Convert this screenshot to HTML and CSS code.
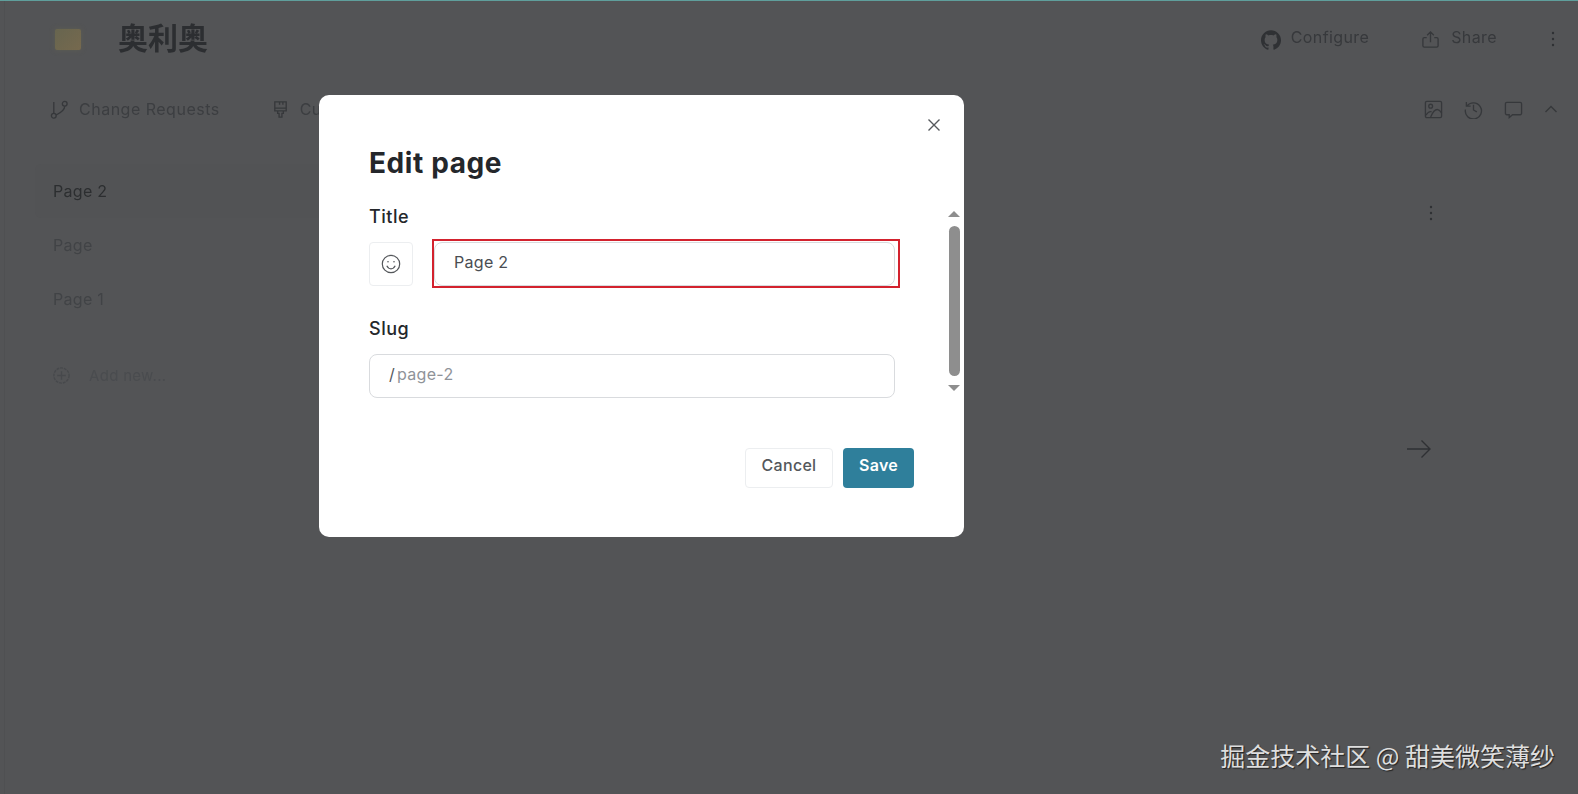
FILE: index.html
```html
<!DOCTYPE html>
<html lang="en">
<head>
    <meta charset="UTF-8">
    <meta name="viewport" content="width=device-width, initial-scale=1.0">
    <title>Edit page</title>
    <link rel="stylesheet" href="styles.css">
</head>
<body>
    <div class="page">
        <header class="topbar">
            <div class="logo"></div>
            <h1 class="site-title">奥利奥</h1>
            <a class="top-link link-configure">
                <svg class="icon-gh" viewBox="0 0 24 24"><path fill="currentColor" d="M12 .297c-6.63 0-12 5.373-12 12 0 5.303 3.438 9.8 8.205 11.385.6.113.82-.258.82-.577 0-.285-.01-1.04-.015-2.04-3.338.724-4.042-1.61-4.042-1.61C4.422 18.07 3.633 17.7 3.633 17.7c-1.087-.744.084-.729.084-.729 1.205.084 1.838 1.236 1.838 1.236 1.07 1.835 2.809 1.305 3.495.998.108-.776.417-1.305.76-1.605-2.665-.3-5.466-1.332-5.466-5.93 0-1.31.465-2.38 1.235-3.22-.135-.303-.54-1.523.105-3.176 0 0 1.005-.322 3.3 1.23.96-.267 1.98-.399 3-.405 1.02.006 2.04.138 3 .405 2.28-1.552 3.285-1.23 3.285-1.23.645 1.653.24 2.873.12 3.176.765.84 1.23 1.91 1.23 3.22 0 4.61-2.805 5.625-5.475 5.92.42.36.81 1.096.81 2.22 0 1.606-.015 2.896-.015 3.286 0 .315.21.69.825.57C20.565 22.092 24 17.592 24 12.297c0-6.627-5.373-12-12-12"/></svg>
                <span>Configure</span>
            </a>
            <a class="top-link link-share">
                <svg class="icon" viewBox="0 0 20 20"><path d="M6 8H3.500A1.500 1.500 0 0 0 2 9.500v7A1.500 1.500 0 0 0 3.500 18h13a1.500 1.500 0 0 0 1.500-1.500v-7A1.500 1.500 0 0 0 16.500 8H14M10 13V2M6.500 5.500 10 2l3.500 3.500"/></svg>
                <span>Share</span>
            </a>
            <svg class="icon-dots" viewBox="0 0 4 16"><circle cx="2" cy="2" r="1.200"/><circle cx="2" cy="8" r="1.200"/><circle cx="2" cy="14" r="1.200"/></svg>
        </header>

        <nav class="subnav">
            <a class="nav-link link-requests">
                <svg class="icon" viewBox="0 0 20 20"><circle cx="4" cy="16.500" r="2.500"/><circle cx="15.500" cy="4" r="2.500"/><path d="M4 14V2M15.500 6.500C15.500 11 10 14 6.500 15.800"/></svg>
                <span>Change Requests</span>
            </a>
            <a class="nav-link link-customize">
                <svg class="icon" viewBox="0 0 20 20"><path d="M4 2h12v9.500H4zM4 8.500h12M7 11.500h6V14h-1.500v4h-3v-4H7zM9 2v3M12.500 2v3"/></svg>
                <span>Customize</span>
            </a>
            <div class="nav-tools">
                <svg class="icon" viewBox="0 0 20 20"><rect x="1.500" y="1.500" width="17" height="17" rx="1.500"/><circle cx="7" cy="6.500" r="2"/><path d="M2 16c2-3 4-4.500 6-3.500M7 18c2-5 5-8 7-8 2 0 3.500 2 4.500 3.500"/></svg>
                <svg class="icon" viewBox="0 0 20 20"><path d="M3 6.500A8.500 8.500 0 1 1 1.500 10M2.500 2v4.500H7M10 5v5.500l3.500 2"/></svg>
                <svg class="icon" viewBox="0 0 20 20"><path d="M3 2.500h14A1.500 1.500 0 0 1 18.500 4v10a1.500 1.500 0 0 1-1.500 1.500H9L5.500 18.500v-3H3A1.500 1.500 0 0 1 1.500 14V4A1.500 1.500 0 0 1 3 2.500z"/></svg>
                <svg class="icon icon-small" viewBox="0 0 14 14"><path d="M1.500 10 7 4.500l5.500 5.500"/></svg>
            </div>
        </nav>

        <div class="content">
            <aside class="sidebar">
                <div class="side-item side-active">Page 2</div>
                <div class="side-item">Page</div>
                <div class="side-item">Page 1</div>
                <div class="side-add">
                    <svg class="icon" viewBox="0 0 20 20"><circle cx="10" cy="10" r="8" stroke-dasharray="3 1"/><path d="M10 5.500v9M5.500 10h9"/></svg>
                    <span>Add new...</span>
                </div>
            </aside>
            <main class="main">
                <svg class="icon-dots" viewBox="0 0 4 16"><circle cx="2" cy="2" r="1.200"/><circle cx="2" cy="8" r="1.200"/><circle cx="2" cy="14" r="1.200"/></svg>
                <svg class="icon-arrow" viewBox="0 0 24 20"><path d="M0 10h23M14.500 1.500 23 10l-8.500 8.500"/></svg>
            </main>
        </div>
    </div>

    <div class="top-line"></div>

    <div class="modal">
        <button class="modal-close">
            <svg viewBox="0 0 14 14"><path d="M1.500 1.500l11 11M12.500 1.500l-11 11"/></svg>
        </button>
        <h2 class="modal-title">Edit page</h2>
        <div class="modal-body">
            <div class="fields">
                <label class="field-label">Title</label>
                <div class="title-row">
                    <div class="emoji-box">
                        <svg viewBox="0 0 20 20"><circle cx="10" cy="10" r="8.700"/><path d="M5.800 11.800c1 2 2.500 3 4.200 3s3.200-1 4.200-3"/><circle class="eye" cx="7" cy="7.800" r=".8"/><circle class="eye" cx="13" cy="7.800" r=".8"/></svg>
                    </div>
                    <div class="title-input">
                        <input class="text-input" type="text" value="Page 2">
                        <div class="annotation"></div>
                    </div>
                </div>
                <label class="field-label slug-label">Slug</label>
                <div class="slug-input"><span class="slash">/</span><span class="slug-value">page-2</span></div>
            </div>
            <div class="scrollbar">
                <div class="arrow-up"></div>
                <div class="thumb"></div>
                <div class="arrow-down"></div>
            </div>
        </div>
        <div class="modal-footer">
            <button class="btn btn-cancel">Cancel</button>
            <button class="btn btn-save">Save</button>
        </div>
    </div>

    <div class="watermark">掘金技术社区 @ 甜美微笑薄纱</div>
</body>
</html>
```

FILE: styles.css
```css
* {
    box-sizing: border-box;
}
body {
    margin: 0;
    height: 794px;
    overflow: hidden;
    background-color: #535456;
    color: #37393c;
    font-family: "Inter", "Noto Sans CJK SC", sans-serif;
}
svg {
    display: block;
    flex: none;
}
.icon {
    width: 19px;
    height: 19px;
    fill: none;
    stroke: #36383b;
    stroke-width: 1.4;
}
.icon-small {
    width: 14px;
    height: 14px;
}
.icon-dots {
    width: 4px;
    height: 16px;
    fill: #2f3134;
}
.page {
    height: 794px;
    border-left: 1px solid #4f5052;
    margin-left: 4px;
    filter: blur(0.4px);
}
.top-line {
    position: absolute;
    top: 0;
    left: 0;
    right: 0;
    height: 1px;
    background-color: #5f9f9c;
}
.topbar {
    display: flex;
    align-items: center;
    height: 78px;
    padding: 0 23px 0 50px;
}
.logo {
    width: 26px;
    height: 21px;
    background: linear-gradient(135deg, #67654f, #76694e);
    border-radius: 2px;
    box-shadow: 0 0 5px #5f5e52;
}
.site-title {
    margin: -6px 0 0 37px;
    font-size: 30px;
    font-weight: 700;
    color: #2c2e31;
    font-family: "Noto Sans CJK SC", sans-serif;
}
.top-link {
    display: flex;
    align-items: center;
    font-size: 16px;
    letter-spacing: 0.4px;
    color: #37393c;
}
.link-configure {
    margin-left: auto;
    gap: 10px;
}
.link-share {
    margin-left: 52px;
    gap: 11px;
}
.top-link span {
    margin-top: -4px;
}
.icon-gh {
    width: 20px;
    height: 20px;
    margin-top: 1px;
    color: #2f3134;
}
.link-share + .icon-dots {
    margin-left: 54px;
}
.subnav {
    display: flex;
    align-items: center;
    height: 40px;
    margin-top: 11px;
    padding: 0 19px 0 45px;
}
.nav-link {
    display: flex;
    align-items: center;
    gap: 10px;
    font-size: 16px;
    letter-spacing: 0.5px;
    color: #3c3e41;
    white-space: nowrap;
}
.link-customize {
    margin-left: 51px;
}
.nav-tools {
    display: flex;
    align-items: center;
    gap: 21px;
    margin-left: auto;
    margin-right: 1px;
}
.content {
    display: flex;
    margin-top: 35px;
}
.sidebar {
    width: 314px;
    padding-left: 30px;
}
.side-item {
    height: 54px;
    line-height: 54px;
    padding-left: 18px;
    font-size: 16px;
    letter-spacing: 0.3px;
    color: #414346;
}
.side-active {
    background-color: #525355;
    border-radius: 6px 0 0 6px;
    color: #2c2e30;
}
.side-add {
    display: flex;
    align-items: center;
    gap: 18px;
    height: 54px;
    margin-top: 22px;
    padding-left: 17px;
    font-size: 15px;
    letter-spacing: 0.3px;
    color: #4a4c4f;
}
.side-add .icon {
    stroke: #47494c;
}
.main {
    flex: 1;
    display: flex;
    flex-direction: column;
    align-items: flex-end;
    padding: 41px 145px 0 0;
}
.icon-arrow {
    width: 24px;
    height: 20px;
    margin-top: 218px;
    margin-right: 2px;
    fill: none;
    stroke: #2f3134;
    stroke-width: 1.4;
}
.modal {
    position: absolute;
    top: 95px;
    left: 319px;
    width: 645px;
    height: 442px;
    padding: 49px 0 0 50px;
    background: white;
    border-radius: 10px;
    color: #24272b;
}
.modal-close {
    position: absolute;
    top: 23px;
    right: 23px;
    width: 14px;
    height: 14px;
    padding: 0;
    border: none;
    background: none;
}
.modal-close svg {
    fill: none;
    stroke: #55585c;
    stroke-width: 1.400;
}
.modal-title {
    margin: 1px 0 0;
    font-size: 28px;
    line-height: 36px;
    font-weight: 700;
    letter-spacing: 0.6px;
}
.modal-body {
    display: flex;
    margin-top: 26px;
}
.fields {
    width: 526px;
}
.field-label {
    display: block;
    font-size: 18px;
    line-height: 20px;
    font-weight: 500;
    letter-spacing: 0.5px;
}
.title-row {
    display: flex;
    gap: 21px;
    margin-top: 15px;
}
.emoji-box {
    display: flex;
    align-items: center;
    justify-content: center;
    width: 44px;
    height: 44px;
    border: 1px solid #eceef0;
    border-radius: 4px;
}
.emoji-box svg {
    width: 20px;
    height: 20px;
    fill: none;
    stroke: #54575b;
    stroke-width: 1.200;
}
.emoji-box .eye {
    fill: #54575b;
    stroke: none;
}
.title-input {
    position: relative;
    flex: 1;
}
.text-input {
    width: 100%;
    height: 44px;
    padding: 0 20px 4px 19px;
    border: 1px solid #d9dbde;
    border-radius: 8px;
    font: 16px "Inter", sans-serif;
    letter-spacing: 0.3px;
    color: #4a4d52;
}
.annotation {
    position: absolute;
    top: -3px;
    left: -2px;
    right: -5px;
    bottom: -2px;
    border: 2px solid #d3222e;
}
.slug-label {
    margin-top: 33px;
}
.slug-input {
    display: flex;
    align-items: center;
    height: 44px;
    margin-top: 15px;
    padding: 0 19px 4px;
    border: 1px solid #d9dbde;
    border-radius: 8px;
    font-size: 16px;
    letter-spacing: 0.3px;
}
.slash {
    color: #55585c;
    margin-right: 2px;
}
.slug-value {
    color: #8f9399;
}
.scrollbar {
    display: flex;
    flex-direction: column;
    align-items: center;
    width: 12px;
    margin: 4px 0 0 53px;
}
.thumb {
    width: 11px;
    height: 150px;
    margin: 9px 0 9px;
    background-color: #8e8e8e;
    border-radius: 6px;
}
.arrow-up,
.arrow-down {
    width: 0;
    height: 0;
    border-left: 6px solid transparent;
    border-right: 6px solid transparent;
}
.arrow-up {
    border-bottom: 6px solid #8e8e8e;
}
.arrow-down {
    border-top: 6px solid #8e8e8e;
}
.modal-footer {
    display: flex;
    justify-content: flex-end;
    gap: 10px;
    margin-top: 50px;
    padding-right: 50px;
}
.btn {
    height: 40px;
    border-radius: 4px;
    font: 500 16px "Inter", sans-serif;
    letter-spacing: 0.3px;
    padding: 0 0 6px;
}
.btn-cancel {
    width: 88px;
    background: white;
    border: 1px solid #eceef0;
    color: #54575b;
}
.btn-save {
    width: 71px;
    background-color: #2f7f9b;
    border: none;
    color: white;
    font-weight: 600;
}
.watermark {
    position: absolute;
    right: 23px;
    top: 738px;
    font-size: 25px;
    line-height: 34px;
    color: #dedede;
    text-shadow: 1px 1px 1px #222;
    font-family: "Noto Sans CJK SC", sans-serif;
}
```
